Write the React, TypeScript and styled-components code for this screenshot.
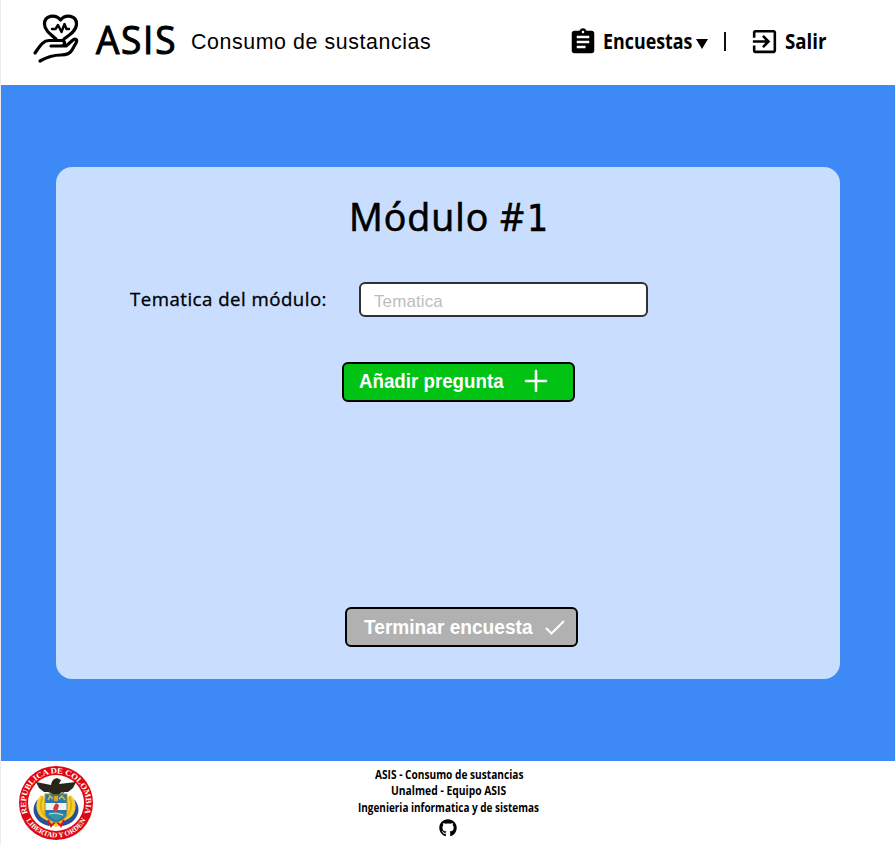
import React from "react";
import styled, { createGlobalStyle } from "styled-components";
import { MdAssignment, MdExitToApp } from "react-icons/md";
import { FaGithub } from "react-icons/fa";

const GlobalStyle = createGlobalStyle`
  * { box-sizing: border-box; }
  body { margin: 0; background: #fff; color: #000; font-family: "Liberation Sans", Arial, sans-serif; }
`;

const Page = styled.div`
  height: 844px;
  display: flex;
  flex-direction: column;
  border-left: 1px solid #ececec;
  overflow: hidden;
`;

const Header = styled.header`
  height: 85.4px;
  flex: none;
  display: flex;
  align-items: flex-start;
  padding-left: 31px;
`;

const HandHeart = styled.svg`
  flex: none;
  width: 48px;
  height: 52px;
  margin-top: 12px;
`;

/* Label of a set width; the glyphs are condensed or widened by $stretch. */
const Label = styled.span<{ $size: number; $width: number; $stretch?: number; $spacing?: number; $weight?: number; $line: number }>`
  display: block;
  flex: none;
  white-space: nowrap;
  width: ${(p) => p.$width}px;
  font-size: ${(p) => p.$size}px;
  font-weight: ${(p) => p.$weight ?? 400};
  line-height: ${(p) => p.$line}px;
  letter-spacing: ${(p) => p.$spacing ?? 0}px;
  transform: scaleX(${(p) => p.$stretch ?? 1});
  transform-origin: left center;
`;

const Humanist = styled(Label)<{ $stroke?: number }>`
  font-family: "Open Sans", "Noto Sans", sans-serif;
  -webkit-text-stroke: ${(p) => p.$stroke ?? 0}px currentColor;
`;

const Brand = styled(Humanist)`
  margin: 12px 0 0 16px;
`;

const Subtitle = styled(Label)`
  margin: 27px 0 0 16px;
`;

const Nav = styled.nav`
  display: flex;
  align-items: center;
  height: 30px;
  margin: 26.5px 0 0 132px;
  svg { flex: none; }
`;

const NavLabel = styled(Humanist)`
  margin: -1px 0 0 5px;
`;

const Caret = styled.span`
  margin: 4px 0 0 3px;
  border: 6px solid transparent;
  border-top: 10px solid #000;
  border-bottom: 0;
`;

const Divider = styled.span`
  width: 2px;
  height: 19px;
  background: #111;
  margin: -1px 23px 0 16px;
`;

const Main = styled.main`
  flex: none;
  height: 675.3px;
  background: #3d8af7;
  padding: 81.3px 55.5px 0 55px;
`;

const Card = styled.section`
  height: 512.8px;
  border-radius: 16px;
  background: #c9ddff;
  display: flex;
  flex-direction: column;
  align-items: flex-start;
`;

const Title = styled(Humanist)`
  height: 54px;
  margin: 23px 0 0 293px;
`;

const Numeral = styled.span`
  font-family: "DejaVu Sans Condensed", "DejaVu Sans", sans-serif;
  font-size: 37px;
  line-height: 1;
  margin-left: 2px;
`;

const Field = styled.label`
  display: flex;
  align-items: center;
  height: 35px;
  margin: 38.3px 0 0 74px;
`;

const Input = styled.input`
  width: 289px;
  height: 35px;
  margin-left: 29px;
  padding: 6px 13px 0;
  border: 2px solid #303136;
  border-radius: 6px;
  background: #fff;
  font: 17px "Liberation Sans", Arial, sans-serif;
  letter-spacing: 0.1px;
  outline: 0;
  &::placeholder { color: #bdbdbd; opacity: 1; }
`;

const Button = styled.button<{ $done?: boolean }>`
  display: flex;
  align-items: center;
  width: 233px;
  height: 40px;
  padding: 0 0 ${(p) => (p.$done ? 0 : 2)}px ${(p) => (p.$done ? 17 : 15)}px;
  margin: ${(p) => (p.$done ? "205px 0 0 289px" : "45px 0 0 286px")};
  border: 2px solid #000;
  border-radius: 6px;
  background: ${(p) => (p.$done ? "#b1b1b1" : "#00c314")};
  color: #fff;
  font-family: "Liberation Sans", Arial, sans-serif;
  text-align: left;
`;

const Footer = styled.footer`
  flex: 1;
  display: flex;
`;

const Seal = styled.svg`
  flex: none;
  width: 76px;
  height: 76px;
  margin: 4.5px 0 0 17px;
`;

const Credits = styled.div`
  width: 182px;
  margin: 6.3px 0 0 264px;
  display: flex;
  flex-direction: column;
  align-items: center;
`;

const GithubIcon = styled(FaGithub)`
  margin: 3px 2px 0 0;
`;

function ColombiaSeal() {
  return (
    <Seal viewBox="0 0 76 76">
      <defs>
        <path id="upper" d="M9.3 50 A31 31 0 1 1 66.7 50" />
        <path id="lower" d="M6.5 52 A34.5 34.5 0 0 0 69.5 52" />
      </defs>
      <circle cx="38" cy="38" r="37" fill="#e10613" />
      <circle cx="38" cy="38" r="28" fill="#fff" />
      <g fill="#fff" fontFamily="Liberation Serif, serif" fontWeight="700" fontSize="8">
        <text dy="1" textAnchor="middle" textLength="118" lengthAdjust="spacingAndGlyphs">
          <textPath href="#upper" startOffset="50%">REPUBLICA DE COLOMBIA</textPath>
        </text>
        <text textAnchor="middle" fontSize="7.2" textLength="72" lengthAdjust="spacingAndGlyphs">
          <textPath href="#lower" startOffset="50%">LIBERTAD Y ORDEN</textPath>
        </text>
      </g>
      <path d="M23 30 C17 37 16 48 23 54 C27 59 34 60 38 62 C44 60 50 59 54 53 C60 47 59 37 53 30 L47 36 L50 51 L38 57 L27 51 L29 36Z" fill="#f4cf2c" />
      <path d="M20 34 C16 43 20 52 28 55 L34 59 L31 61 C22 59 16 53 15.5 45 C15.5 41 17 37 20 34Z M56 34 C60 43 56 52 48 55 L42 59 L45 61 C54 59 60 53 60.5 45 C60.5 41 59 37 56 34Z" fill="#28509a" />
      <path d="M25 31 C20 42 24 50 31 54 M51 31 C56 42 52 50 45 54" fill="none" stroke="#dda90f" strokeWidth="1.6" />
      <path d="M30 55 L33 61 L37 57 M46 55 L43 61 L39 57" fill="none" stroke="#d31920" strokeWidth="2" />
      <path d="M27 29 H49 V47 C49 54 42 56 38 58 C34 56 27 54 27 47Z" fill="#2678b0" stroke="#b48d25" strokeWidth="1" />
      <path d="M27.5 38 H48.5 V45 H27.5Z" fill="#f3f3ed" />
      <path d="M38 38 L41 40 L40 44 L38 47 L35 44 L36 41Z" fill="#e03836" />
      <path d="M30 35 L32 31 L35 34 M41 34 L44 31 L47 35" fill="none" stroke="#c9b455" strokeWidth="1.8" />
      <path d="M36 31 H40 V36 H36Z" fill="#e1a32a" />
      <path d="M29 49 L34 47 L38 49 L43 47 L47 50 L38 56Z" fill="#3596a0" />
      <path d="M31 49 L38 48 L45 50" fill="none" stroke="#e5d8a1" strokeWidth="1.2" />
      <path d="M18 17 L33 20 C34 16 35 14 39 13 L43 15 L41 19 L58 17 L55 23 L50 27 L44 27 L40 30 L35 30 L31 27 L26 27 L21 23Z" fill="#28251a" />
      <path d="M31 27 L35 30 H42 L46 27" fill="none" stroke="#62784a" strokeWidth="1.5" />
    </Seal>
  );
}

export default function App() {
  return (
    <Page>
      <GlobalStyle />
      <Header>
        <HandHeart viewBox="0 0 48 52" fill="none" stroke="#000" strokeWidth="3.2" strokeLinecap="round" strokeLinejoin="round">
          <path d="M24 27 C18 22 12.5 18 12.5 12 C12.5 3.5 23 1.5 28.5 8 C34 1.5 44.5 3.5 44.5 12 C44.5 18 39 22 32 27" />
          <path strokeWidth="2.4" d="M20 17 H23.5 L26 13 L29.5 20 L32.5 12 L34.5 17 H37" />
          <path d="M3 41 C8 34 11 28.5 17 28.5 H30 C34 29 33 34 29 34 H19 M29 34 H34 L41 28 C43 26.5 46 27 44 31 L40 38 C38 42 34 43 29 43 C20 43 15 45 8 49" />
        </HandHeart>
        <Brand as="h1" $size={38.5} $width={79} $line={54} $stroke={1.1} $spacing={1.8} $stretch={0.96}>ASIS</Brand>
        <Subtitle $size={22} $width={245} $line={30} $spacing={0.6} $stretch={0.971}>Consumo de sustancias</Subtitle>
        <Nav>
          <MdAssignment size={30} />
          <NavLabel $size={21} $width={90} $line={30} $weight={700} $stretch={0.85}>Encuestas</NavLabel>
          <Caret />
          <Divider />
          <MdExitToApp size={31} />
          <NavLabel $size={21} $width={42} $line={30} $weight={700} $stretch={0.89}>Salir</NavLabel>
        </Nav>
      </Header>
      <Main>
        <Card>
          <Title as="h2" $size={38.5} $width={200} $line={52} $stroke={0.7} $spacing={1} $stretch={0.975}>Módulo #<Numeral>1</Numeral></Title>
          <Field>
            <Humanist $size={19} $width={200} $line={33} $stroke={0.35} $spacing={0.5} $stretch={0.98}>Tematica del módulo:</Humanist>
            <Input placeholder="Tematica" />
          </Field>
          <Button>
            <Label $size={19.5} $width={165} $line={30} $weight={700} $stretch={0.96}>Añadir pregunta</Label>
            <svg width="24" height="24" viewBox="0 0 24 24" stroke="#fff" strokeWidth="2.6" strokeLinecap="round"><path d="M2 12 H22 M12 2 V22" /></svg>
          </Button>
          <Button $done>
            <Label $size={19.5} $width={179} $line={32} $weight={700} $stretch={0.98}>Terminar encuesta</Label>
            <svg width="24" height="24" viewBox="0 0 24 24" fill="none" stroke="#fff" strokeWidth="2"><path d="M3 13 L8.5 18.5 L21 6" /></svg>
          </Button>
        </Card>
      </Main>
      <Footer>
        <ColombiaSeal />
        <Credits>
          <Humanist $size={12} $width={149} $line={16.5} $weight={700} $stretch={0.845}>ASIS - Consumo de sustancias</Humanist>
          <Humanist $size={12} $width={116} $line={16.5} $weight={700} $stretch={0.86}>Unalmed - Equipo ASIS</Humanist>
          <Humanist $size={12} $width={182} $line={16.5} $weight={700} $stretch={0.83}>Ingenieria informatica y de sistemas</Humanist>
          <GithubIcon size={18} />
        </Credits>
      </Footer>
    </Page>
  );
}
